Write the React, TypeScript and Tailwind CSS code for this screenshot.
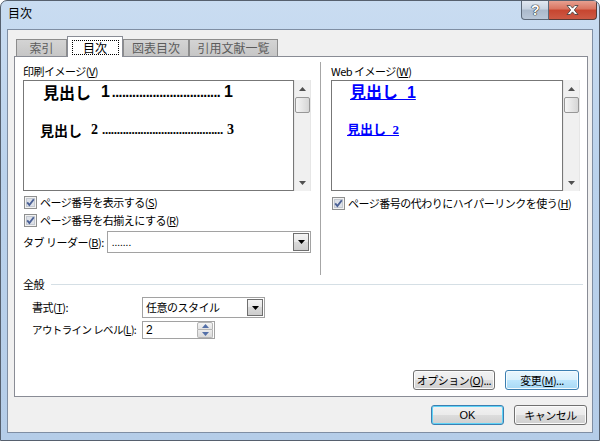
import React from "react";

const Mn = ({ c }: { c: string }) => <span className="underline">{c}</span>;

function CheckBox() {
  return (
    <svg width="13" height="13" viewBox="0 0 13 13" className="shrink-0">
      <rect x="0.5" y="0.5" width="12" height="12" fill="#f2f2f2" stroke="#8e8f8f" />
      <rect x="2.5" y="2.5" width="8" height="8" fill="#dde1e8" stroke="#c3c8d0" />
      <path d="M3.2 6.3 L5.4 9 L9.8 3.2" stroke="#4b6196" strokeWidth="1.9" fill="none" />
    </svg>
  );
}

function DownTri({ color = "#000" }: { color?: string }) {
  return (
    <svg width="7" height="4" viewBox="0 0 7 4">
      <path d="M0 0H7L3.5 4z" fill={color} />
    </svg>
  );
}

function UpTri({ color = "#000" }: { color?: string }) {
  return (
    <svg width="7" height="4" viewBox="0 0 7 4">
      <path d="M3.5 0L7 4H0z" fill={color} />
    </svg>
  );
}

function ScrollBar() {
  return (
    <div className="w-[17px] h-full bg-[#f0f0f0] border-x border-[#e6e6e6] flex flex-col items-center">
      <div className="h-[17px] flex items-center justify-center">
        <UpTri color="#505050" />
      </div>
      <div className="w-[15px] h-[16px] rounded-[2px] border border-[#979797] bg-[linear-gradient(90deg,#f5f5f5,#e6e6e6_50%,#d6d6d6)]" />
      <div className="flex-1" />
      <div className="h-[17px] flex items-center justify-center">
        <DownTri color="#505050" />
      </div>
    </div>
  );
}

function DropButton({ h }: { h: string }) {
  return (
    <div className={`w-[16px] ${h} border border-[#6f6f6f] bg-[linear-gradient(#f4f4f4,#e8e8e8_50%,#d9d9d9_50%,#cdcdcd)] flex items-center justify-center`}>
      <DownTri />
    </div>
  );
}

function Btn({ children, w, kind = "normal" }: { children: React.ReactNode; w: string; kind?: "normal" | "hover" | "default" }) {
  const look =
    kind === "hover"
      ? "border-[#3c7fb1] bg-[linear-gradient(#eaf6fd,#d9f0fc_50%,#bee6fd_50%,#a7d9f5)] shadow-[inset_0_0_0_1px_#f4fbfe]"
      : kind === "default"
      ? "border-[#3c7fb1] bg-[linear-gradient(#f2f2f2,#ebebeb_50%,#dddddd_50%,#cfcfcf)] shadow-[inset_0_0_0_1px_#5fd3f7]"
      : "border-[#707070] bg-[linear-gradient(#f2f2f2,#ebebeb_50%,#dddddd_50%,#cfcfcf)] shadow-[inset_0_0_0_1px_#fbfbfb]";
  return (
    <div className={`${w} h-[20px] rounded-[3px] border ${look} flex items-center justify-center text-black whitespace-nowrap`}>
      {children}
    </div>
  );
}

function Tab({ label, w, selected }: { label: string; w: string; selected?: boolean }) {
  if (selected) {
    return (
      <div className={`${w} h-[21px] bg-white border border-b-0 border-[#898c95] flex items-start justify-center pt-[3px]`}>
        <div className="w-[47px] h-[15px] border border-dotted border-black flex items-center justify-center text-[12px] tracking-normal">
          {label}
        </div>
      </div>
    );
  }
  return (
    <div className={`${w} h-[17px] mb-px bg-[linear-gradient(#d4d4d4,#c6c6c6)] border border-b-0 border-[#8c8c8c] flex items-center justify-center text-[12px] tracking-normal text-[#5c5c5c]`}>
      {label}
    </div>
  );
}

export default function App() {
  return (
    <div className="w-[603px] h-[441px] bg-white font-['Noto_Sans_CJK_JP','Noto_Sans',sans-serif] text-[11px] tracking-[-0.5px] text-black leading-none whitespace-nowrap">
      <div className="w-[600px] h-[441px] rounded-t-[7px] border border-[#56606e] bg-[linear-gradient(#c9dcf1,#bad2ec_40%,#b5cde8)] flex flex-col overflow-hidden">
        {/* title bar */}
        <div className="h-[28px] flex items-start">
          <div className="pl-[7px] pt-[6px] text-[12px] tracking-normal">目次</div>
          <div className="flex-1" />
          <div className="flex mr-[2px]">
            <div className="w-[28px] h-[19px] rounded-bl-[4px] border border-t-0 border-[#5b6878] bg-[linear-gradient(#e1e8f1,#c7d3e1_45%,#aab9cb_50%,#b9c7d8)] flex items-center justify-center">
              <span className="font-['Liberation_Sans',sans-serif] font-bold text-[14px] text-white [text-shadow:0_0_1px_#222,0_0_1px_#222,0_0_1px_#222]">?</span>
            </div>
            <div className="w-[48px] h-[19px] rounded-br-[4px] border border-t-0 border-l-0 border-[#5b3a36] bg-[linear-gradient(#e7a090,#d9735f_45%,#c7452f_50%,#cd5a45)] flex items-center justify-center">
              <svg width="13" height="10" viewBox="0 0 13 10">
                <path d="M1 0.5h3.2l2.3 2.6 2.3-2.6H12L8.3 5 12 9.5H8.8L6.5 6.9 4.2 9.5H1L4.7 5z" fill="#fff" stroke="#3a3a3a" strokeWidth="0.8" />
              </svg>
            </div>
          </div>
        </div>

        {/* client area */}
        <div className="ml-[6px] mr-[6px] mb-[7px] flex-1 bg-[#f0f0f0] border border-[#7f8ea3] flex flex-col">
          <div className="ml-[6px] mr-[4px] pt-[6px]">
            <div className="relative z-10 -mb-px flex items-end h-[21px] pl-[2px]">
              <Tab label="索引" w="w-[51px]" />
              <Tab label="目次" w="w-[56px]" selected />
              <Tab label="図表目次" w="w-[66px]" />
              <Tab label="引用文献一覧" w="w-[89px]" />
            </div>

            {/* tab panel */}
            <div className="h-[341px] bg-white border border-[#898c95] flex flex-col">
              <div className="flex pt-[5px] pl-[8px]">
                {/* print preview */}
                <div className="w-[288px] flex flex-col">
                  <div className="h-[18px] flex items-center">
                    印刷イメージ(<Mn c="V" />)
                  </div>
                  <div className="flex h-[111px]">
                    <div className="w-[271px] h-full border border-[#777] bg-white flex flex-col">
                      <div className="pl-[19px] pt-[1px]">
                        <div className="w-[190px] h-[20px] flex items-center font-bold text-[16px] tracking-normal">
                          <span>見出し</span>
                          <span className="ml-[10px] font-['Liberation_Sans',sans-serif]">1</span>
                          <span className="flex-1 ml-[1px] mr-[3px] flex justify-center font-['Liberation_Sans',sans-serif] text-[14px] tracking-[-0.5px]">
                            ................................
                          </span>
                          <span className="font-['Liberation_Sans',sans-serif]">1</span>
                        </div>
                      </div>
                      <div className="pl-[16px] mt-[18px]">
                        <div className="w-[194px] h-[19px] flex items-center font-bold text-[14px] tracking-normal">
                          <span>見出し</span>
                          <span className="ml-[9px] font-['Liberation_Serif',serif]">2</span>
                          <span className="flex-1 ml-[1px] mr-[1px] flex justify-center font-['Liberation_Serif',serif] text-[13px] tracking-[-0.3px]">
                            .........................................
                          </span>
                          <span className="font-['Liberation_Serif',serif]">3</span>
                        </div>
                      </div>
                    </div>
                    <ScrollBar />
                  </div>
                  <div className="mt-[2px] h-[18px] flex items-center pl-[1px] gap-[3px]">
                    <CheckBox />
                    <span>ページ番号を表示する(<Mn c="S" />)</span>
                  </div>
                  <div className="h-[18px] flex items-center pl-[1px] gap-[3px]">
                    <CheckBox />
                    <span>ページ番号を右揃えにする(<Mn c="R" />)</span>
                  </div>
                  <div className="mt-[2px] h-[22px] flex items-center">
                    <span className="w-[84px]">タブ リーダー(<Mn c="B" />):</span>
                    <div className="w-[205px] h-[22px] border border-[#a2a2a2] bg-white flex items-center pl-[4px] pr-[1px]">
                      <span className="flex-1 text-[10px] tracking-normal">.......</span>
                      <DropButton h="h-[18px]" />
                    </div>
                  </div>
                </div>

                <div className="ml-[9px] w-px h-[213px] bg-[#a6a6a6]" />

                {/* web preview */}
                <div className="ml-[10px] w-[249px] flex flex-col">
                  <div className="h-[18px] flex items-center">
                    Web イメージ(<Mn c="W" />)
                  </div>
                  <div className="flex h-[111px]">
                    <div className="w-[232px] h-full border border-[#777] bg-white flex flex-col text-[#0000ff]">
                      <div className="pl-[18px] pt-[1px] h-[21px] flex items-center font-bold text-[16px] tracking-normal">
                        <span className="underline whitespace-pre">
                          見出し<span className="font-['Liberation_Sans',sans-serif]">  1</span>
                        </span>
                      </div>
                      <div className="pl-[15px] mt-[17px] h-[19px] flex items-center font-bold text-[13px] tracking-normal">
                        <span className="underline whitespace-pre">
                          見出し<span className="font-['Liberation_Serif',serif]">  2</span>
                        </span>
                      </div>
                    </div>
                    <ScrollBar />
                  </div>
                  <div className="mt-[3px] h-[18px] flex items-center pl-[1px] gap-[3px]">
                    <CheckBox />
                    <span>ページ番号の代わりにハイパーリンクを使う(<Mn c="H" />)</span>
                  </div>
                </div>
              </div>

              {/* general */}
              <div className="mt-px h-[16px] flex items-center pl-[8px] pr-[4px]">
                <span>全般</span>
                <div className="flex-1 ml-[7px] h-px bg-[#d5dfe5]" />
              </div>
              <div className="mt-[5px] h-[21px] flex items-center pl-[17px]">
                <span className="w-[110px]">書式(<Mn c="T" />):</span>
                <div className="w-[123px] h-[21px] border border-[#a2a2a2] bg-white flex items-center pl-[3px] pr-[1px]">
                  <span className="flex-1">任意のスタイル</span>
                  <DropButton h="h-[17px]" />
                </div>
              </div>
              <div className="mt-[3px] h-[18px] flex items-center pl-[17px]">
                <span className="w-[110px] text-[10.5px] tracking-[-0.6px]">アウトライン レベル(<Mn c="L" />):</span>
                <div className="w-[73px] h-[18px] border border-[#a2a2a2] bg-white flex items-center pl-[3px] pr-px">
                  <span className="flex-1 font-['Liberation_Sans',sans-serif] text-[12px]">2</span>
                  <div className="w-[16px] h-[16px] flex flex-col">
                    <div className="h-[8px] rounded-t-[2px] border border-[#b5b5b5] bg-[linear-gradient(#f5f5f5,#e3e3e3)] flex items-center justify-center">
                      <UpTri color="#5470a8" />
                    </div>
                    <div className="h-[8px] rounded-b-[2px] border border-t-0 border-[#b5b5b5] bg-[linear-gradient(#ececec,#dadada)] flex items-center justify-center">
                      <DownTri color="#5470a8" />
                    </div>
                  </div>
                </div>
              </div>

              <div className="flex-1" />
              <div className="flex justify-end gap-[10px] pr-[8px] pb-[6px]">
                <Btn w="w-[82px]">
                  オプション(<Mn c="O" />)...
                </Btn>
                <Btn w="w-[74px]" kind="hover">
                  変更(<Mn c="M" />)...
                </Btn>
              </div>
            </div>
          </div>

          <div className="mt-[8px] flex justify-end gap-[10px] pr-[5px]">
            <Btn w="w-[73px]" kind="default">
              <span className="font-['Liberation_Sans',sans-serif] tracking-normal">OK</span>
            </Btn>
            <Btn w="w-[73px]">キャンセル</Btn>
          </div>
        </div>
      </div>
    </div>
  );
}
